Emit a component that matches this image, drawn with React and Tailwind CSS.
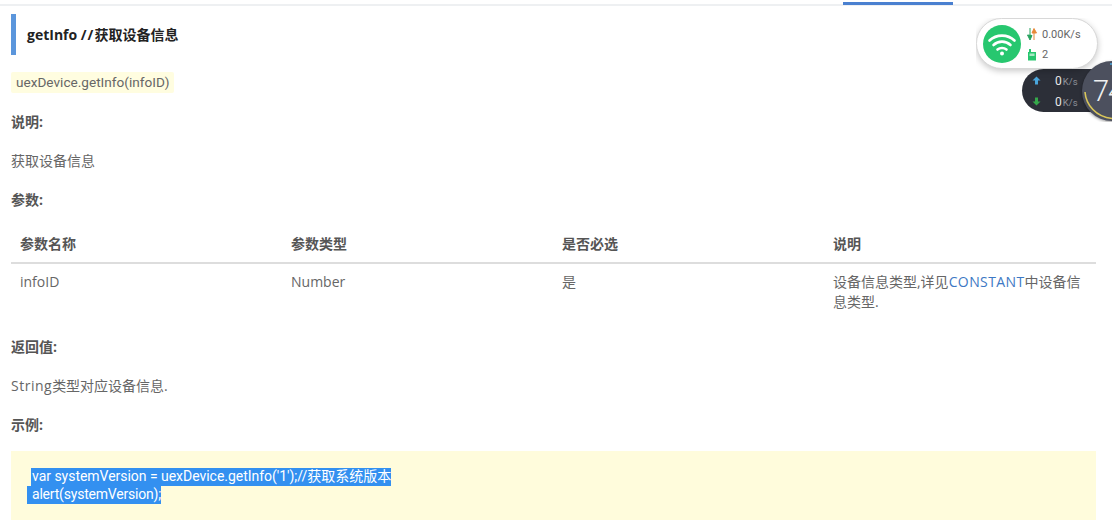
import React from "react";

function Label({ children }) {
  return <p className="h-[39px] text-[14px] font-bold leading-[39px] text-[#555]">{children}</p>;
}

function Body({ children }) {
  return <p className="h-[39px] text-[14px] leading-[39px] text-[#666]">{children}</p>;
}

function Wifi() {
  return (
    <svg width="38" height="38" viewBox="0 0 38 38">
      <circle cx="19" cy="19" r="19" fill="#27c76f" />
      <g fill="none" stroke="#fff" strokeWidth="2.6" strokeLinecap="round">
        <path d="M6.5 15.5C13.5 9 24.5 9 31.5 15.5" />
        <path d="M10.5 20C15.5 15.5 22.5 15.5 27.5 20" />
        <path d="M14.500 24.500C17 22.500 21 22.500 23.500 24.500" />
      </g>
      <circle cx="19" cy="28.500" r="2" fill="#fff" />
    </svg>
  );
}

function Widgets() {
  return (
    <div className="absolute left-[976px] top-[18px] h-[104px] w-[136px] overflow-hidden font-['Roboto',sans-serif]">
      <div className="absolute left-[46px] top-[51px] h-[43px] w-[90px] rounded-l-[22px] bg-[#2c2f38]">
        <svg className="absolute left-[10px] top-[7px]" width="9" height="9" viewBox="0 0 9 9">
          <path d="M4.500 0.500L8.500 4.500H6V8.500H3V4.500H0.500Z" fill="#4aa6dc" />
        </svg>
        <svg className="absolute left-[10px] top-[28px]" width="9" height="9" viewBox="0 0 9 9">
          <path d="M4.500 8.500L8.500 4.500H6V0.500H3V4.500H0.500Z" fill="#35a84a" />
        </svg>
        <div className="absolute left-[33px] top-[5px] flex items-baseline text-[9.5px] leading-[14px] text-[#8f929a]">
          <span className="text-[12px] text-[#e8e8e8]">0</span>
          <span className="ml-[1px]">K/s</span>
        </div>
        <div className="absolute left-[33px] top-[26px] flex items-baseline text-[9.5px] leading-[14px] text-[#8f929a]">
          <span className="text-[12px] text-[#e8e8e8]">0</span>
          <span className="ml-[1px]">K/s</span>
        </div>
      </div>
      <div className="absolute left-[106px] top-[43px] h-[60px] w-[60px] overflow-hidden rounded-full bg-[#4c505e] shadow-[0_1px_3px_rgba(0,0,0,0.4)]">
        <svg className="absolute left-0 top-0" width="60" height="60" viewBox="0 0 60 60">
          <path d="M3 31C4 44 14 56 30 57.500C34 57.500 37 57 41 55.500" fill="none" stroke="#d9c65a" strokeWidth="1.600" />
          <circle cx="29" cy="3" r="1" fill="#4aa6dc" />
        </svg>
        <span className="absolute left-[11px] top-[13px] text-[29px] font-light leading-[34px] tracking-[-1px] text-[#f0f0f0]">74</span>
      </div>
      <div className="absolute left-0 top-0 flex h-[51px] w-[122px] items-center rounded-[26px] border border-[#d8d8d8] bg-white pl-[6px] shadow-[0_2px_6px_rgba(0,0,0,0.22)]">
        <Wifi />
        <div className="ml-[6px] mt-[2px] flex flex-col gap-[5px] text-[11px] leading-[15px] text-[#666]">
          <div className="flex items-center gap-[5px]">
            <svg width="10" height="13" viewBox="0 0 10 13">
              <path d="M3 0V9M0.500 7L3 12L5 7.500Z" fill="#27a35f" stroke="#27a35f" strokeWidth="1" />
              <path d="M7 12V3M5 5L7 0.500L9.500 5Z" fill="#e8893a" stroke="#e8893a" strokeWidth="1" />
            </svg>
            <span>0.00K/s</span>
          </div>
          <div className="flex items-center gap-[5px]">
            <svg width="10" height="13" viewBox="0 0 10 13">
              <path d="M1 4H2V1H4V4H9V12.500H1Z" fill="#27c76f" />
              <rect x="2.500" y="5.500" width="5" height="2.500" fill="#fff" opacity="0.6" />
            </svg>
            <span>2</span>
          </div>
        </div>
      </div>
    </div>
  );
}

export default function App() {
  return (
    <div className="relative h-[531px] w-[1112px] overflow-hidden bg-white font-['Open_Sans','Noto_Sans_CJK_SC',sans-serif]">
      <div className="flex h-[6px] justify-end border-b-2 border-[#eef0f2]">
        <div className="mr-[159px] mt-[2px] h-[3px] w-[110px] bg-[#4a80d0]" />
      </div>

      <main className="px-[11px] pt-[8px]">
        <h2 className="flex h-[41px] items-center whitespace-pre border-l-[5px] border-[#5b96dc] pl-[11px] text-[14px] font-bold text-[#222]">
          <span>getInfo </span>
          <span className="tracking-[1px]">//</span>
          <span>获取设备信息</span>
        </h2>
        <div className="mt-[17px] flex">
          <code className="h-[21px] w-[163px] rounded-[2px] bg-[#fffde0] pl-[5px] font-['Roboto','Noto_Sans_CJK_SC',sans-serif] text-[13.6px] leading-[21px] text-[#666]">
            uexDevice.getInfo(infoID)
          </code>
        </div>

        <div className="mt-[9px]">
          <Label>说明:</Label>
          <Body>获取设备信息</Body>
          <Label>参数:</Label>
        </div>

        <table className="mt-[6px] w-[1085px] table-fixed border-collapse text-left text-[14px] text-[#666]">
          <thead>
            <tr className="h-[38px] border-b-2 border-[#dddddd]">
              <th className="w-[271px] px-[9px] font-bold text-[#555]">参数名称</th>
              <th className="w-[271px] px-[9px] font-bold text-[#555]">参数类型</th>
              <th className="w-[271px] px-[9px] font-bold text-[#555]">是否必选</th>
              <th className="px-[9px] font-bold text-[#555]">说明</th>
            </tr>
          </thead>
          <tbody>
            <tr className="align-top">
              <td className="px-[9px] pt-[8px] leading-[20px]">infoID</td>
              <td className="px-[9px] pt-[8px] leading-[20px]">Number</td>
              <td className="px-[9px] pt-[8px] leading-[20px]">是</td>
              <td className="px-[9px] pb-[8px] pt-[8px] leading-[20px]">
                设备信息类型,详见<span className="tracking-[0.4px] text-[#3d78c4]">CONSTANT</span>中设备信息类型.
              </td>
            </tr>
          </tbody>
        </table>

        <div className="mt-[7px]">
          <Label>返回值:</Label>
          <Body><span className="tracking-[0.5px]">String</span>类型对应设备信息.</Body>
          <Label>示例:</Label>
        </div>

        <div className="mt-[7px] h-[69px] w-[1085px] bg-[#fffcdc] pl-[16px] pt-[17px] font-['Roboto','Noto_Sans_CJK_SC',sans-serif] text-[14px] whitespace-nowrap text-white">
          <div className="ml-[4px] h-[18px] w-[360px] bg-[#3390f0] pl-px leading-[16px]">
            <span className="tracking-[-0.03px]">var systemVersion = uexDevice.getInfo('1');//</span>获取系统版本
          </div>
          <div className="h-[18px] w-[134px] bg-[#3390f0] pl-[5px] leading-[16px] tracking-[-0.2px]">alert(systemVersion);</div>
        </div>
      </main>

      <Widgets />
    </div>
  );
}
